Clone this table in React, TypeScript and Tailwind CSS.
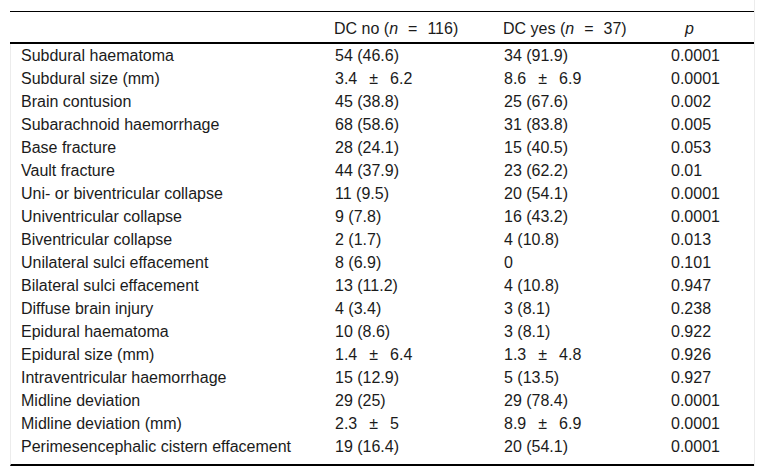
import React from "react";

type Row = [string, string, string, string];

const rows: Row[] = [
  ["Subdural haematoma", "54 (46.6)", "34 (91.9)", "0.0001"],
  ["Subdural size (mm)", "3.4 ± 6.2", "8.6 ± 6.9", "0.0001"],
  ["Brain contusion", "45 (38.8)", "25 (67.6)", "0.002"],
  ["Subarachnoid haemorrhage", "68 (58.6)", "31 (83.8)", "0.005"],
  ["Base fracture", "28 (24.1)", "15 (40.5)", "0.053"],
  ["Vault fracture", "44 (37.9)", "23 (62.2)", "0.01"],
  ["Uni- or biventricular collapse", "11 (9.5)", "20 (54.1)", "0.0001"],
  ["Univentricular collapse", "9 (7.8)", "16 (43.2)", "0.0001"],
  ["Biventricular collapse", "2 (1.7)", "4 (10.8)", "0.013"],
  ["Unilateral sulci effacement", "8 (6.9)", "0", "0.101"],
  ["Bilateral sulci effacement", "13 (11.2)", "4 (10.8)", "0.947"],
  ["Diffuse brain injury", "4 (3.4)", "3 (8.1)", "0.238"],
  ["Epidural haematoma", "10 (8.6)", "3 (8.1)", "0.922"],
  ["Epidural size (mm)", "1.4 ± 6.4", "1.3 ± 4.8", "0.926"],
  ["Intraventricular haemorrhage", "15 (12.9)", "5 (13.5)", "0.927"],
  ["Midline deviation", "29 (25)", "29 (78.4)", "0.0001"],
  ["Midline deviation (mm)", "2.3 ± 5", "8.9 ± 6.9", "0.0001"],
  ["Perimesencephalic cistern effacement", "19 (16.4)", "20 (54.1)", "0.0001"],
];

// "3.4 ± 6.2" is typeset with wide gaps around the ±
function Value({ v }: { v: string }) {
  const parts = v.split(" ± ");
  if (parts.length === 1) return <>{v}</>;
  return (
    <>
      {parts[0]}
      <span className="mx-[12px]">±</span>
      {parts[1]}
    </>
  );
}

const cols = "grid grid-cols-[314px_169px_167px_1fr]";

export default function App() {
  return (
    <div className="w-[765px] h-[476px] bg-white font-['Liberation_Sans',Arial,sans-serif] text-[16px] leading-[18px] text-[#1b1b1b]">
      <div className="ml-[10px] w-[745px] border-r border-[#ececec] pt-[11px]">
        <div className="border-t border-black">
          {/* Header */}
          <div className={`${cols} h-[32px] items-center pt-[4px] border-b-2 border-black`}>
            <div />
            <div className="pl-[10px] whitespace-nowrap">
              DC no (<i>n</i>
              <span className="mx-[10px]">=</span>116)
            </div>
            <div className="pl-[10px] whitespace-nowrap">
              DC yes (<i>n</i>
              <span className="mx-[10px]">=</span>37)
            </div>
            <div className="pl-[25px]">
              <i>p</i>
            </div>
          </div>

          {/* Body */}
          <div className="border-l border-[#ececec] pb-[6px] border-b-2 border-b-black">
            {rows.map((r) => (
              <div key={r[0]} className={`${cols} h-[23px] items-center`}>
                <div className="pl-[10px] whitespace-nowrap">{r[0]}</div>
                <div className="pl-[10px]">
                  <Value v={r[1]} />
                </div>
                <div className="pl-[10px]">
                  <Value v={r[2]} />
                </div>
                <div className="pl-[10px]">{r[3]}</div>
              </div>
            ))}
          </div>
        </div>
      </div>
    </div>
  );
}
